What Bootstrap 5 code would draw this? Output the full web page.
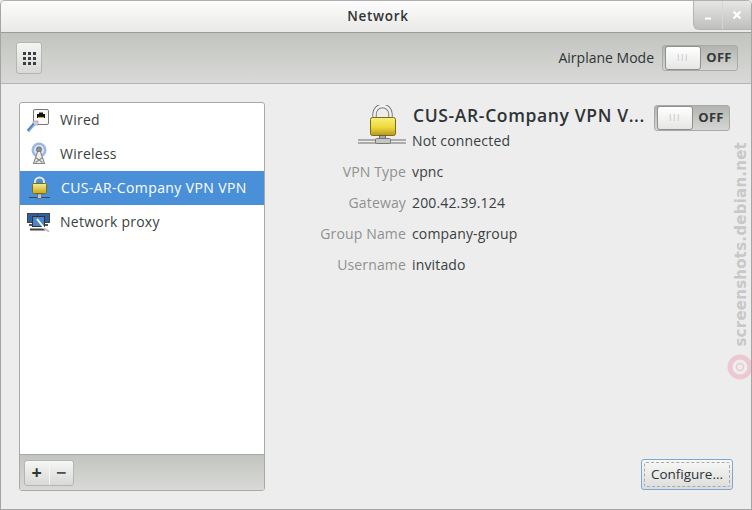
<!DOCTYPE html>
<html lang="en">
<head>
<meta charset="utf-8">
<title>Network</title>
<link href="https://cdn.jsdelivr.net/npm/bootstrap@5.3.0/dist/css/bootstrap.min.css" rel="stylesheet">
<style>
html,body{margin:0;width:752px;height:510px;overflow:hidden;background:#ededed}
body{font-family:"Open Sans","Noto Sans",sans-serif;font-size:14px;color:#2e3436;line-height:1.2}
.gwin{position:relative;width:752px;height:510px;border:1px solid #a5a6a3;border-top-color:#b0b0ae;border-radius:5px 5px 0 0;background:#ededed;overflow:hidden}
.gtitle{height:32px;padding-left:4px;background:linear-gradient(#fcfcfc,#e9e9e7);border-bottom:1px solid #9a9c98;font-weight:600;font-size:13.5px;letter-spacing:.7px}
.wmbtns{position:absolute;top:0;right:0;width:58px;height:29px;border:1px solid #b5b6b3;border-top:0;border-right:0;border-radius:0 0 0 6px;background:linear-gradient(#e6e6e4,#bfc0bd)}
.wmbtns>span{flex:1 1 0;height:100%}
.wmbtns>span+span{border-left:1px solid #d5d6d3}
.gtool{height:51px;padding:0 13px 0 15px;background:linear-gradient(#c2c4c0,#d9dad7);border-bottom:1px solid #b4b6b2}
.gridbtn{width:26px;height:32px;padding:0;border:1px solid #b4b6b2;border-radius:3px;background:linear-gradient(#f5f5f4,#d8d9d6)}
.gswitch{width:76px;height:26px;flex:none;border:1px solid #a8aaa6;border-radius:3px;background:linear-gradient(#b2b4b0,#d6d7d4)}
.gknob{width:36px;height:24px;margin-left:2px;border:1px solid #8e908c;border-radius:3px;background:linear-gradient(#fff,#e6e6e5);color:#c4c4c2;font-size:9px;letter-spacing:1.5px;font-weight:400}
.goff{flex:1;text-align:center;font-weight:700;font-size:13px;color:#33383a;letter-spacing:.3px}
.gbody{padding:18px;height:425px}
.gside{width:246px;height:389px;flex:none;border:1px solid #a8aaa6;border-radius:3px;background:#fff;overflow:hidden}
.gside .list-group{--bs-list-group-bg:transparent;--bs-list-group-border-width:0;--bs-list-group-color:#2e3436;--bs-list-group-border-radius:0}
.gitem{height:34px;padding:0 0 0 7px;gap:9px;font-size:14px;letter-spacing:.25px;color:#3a3f41}
.gitem.list-group-item.active{background:#4a90d9;color:#fff;--bs-list-group-active-bg:#4a90d9;gap:10px;letter-spacing:.38px}
.gitem svg{flex:none}
.gbar{height:36px;padding:5px 0 0 4px;margin-top:auto;background:linear-gradient(#c2c4c0,#d9dad7);border-top:1px solid #a9aba7}
.gpm{width:50px;height:26px;border:1px solid #b4b6b2;border-radius:3px;background:linear-gradient(#f6f6f5,#d9dad7)}
.gpm>span{flex:1 1 0;text-align:center;font-weight:700;font-size:18px;line-height:22px;color:#2e3436}
.gpm>span+span{border-left:1px solid #f5f5f5;color:#4a4f50}
.gmain{position:relative;height:388px}
.ghead{padding-left:93px;height:46px}
.gbig{flex:none;margin-top:3px;margin-right:5px}
.gname{font-weight:600;font-size:17.5px;letter-spacing:.63px;width:243px;white-space:nowrap;color:#2e3436;line-height:24px;padding-left:2px;margin-top:1px}
.gstat{font-size:14px;letter-spacing:.18px;margin-top:6px;padding-left:1px;color:#3a3f41}
.gsw2{margin-top:3px}
.gdetail{display:grid;grid-template-columns:141px auto;column-gap:6px;margin:16px 0 0;font-size:14px;letter-spacing:.15px}
.gdetail dt{font-weight:400;color:#8f9190;text-align:right;height:31px;margin:0}
.gdetail dd{margin:0;height:31px;color:#3a3f41}
.gconf{width:92px;height:31px;padding:0;border:1px solid #7ba7d6;border-radius:3px;background:linear-gradient(#f8f8f7,#dcdcda);font-size:13.5px;color:#2e3436;position:absolute;right:0;bottom:0}
.gconf>span{display:flex;align-items:center;justify-content:center;margin:2px;height:25px;border:1px dashed #a9a9a9;border-radius:2px}
.wmark{position:absolute;left:731px;top:141px;writing-mode:vertical-rl;transform:rotate(180deg);font-family:"DejaVu Sans",sans-serif;font-weight:700;font-size:15px;line-height:18px;letter-spacing:.24px;color:#c8c8c8;white-space:nowrap}
.wcam{position:absolute;left:726px;top:353px}
</style>
</head>
<body>
<div class="gwin">
  <div class="gtitle d-flex align-items-center justify-content-center">Network</div>
  <div class="wmbtns d-flex">
    <span class="d-flex align-items-center justify-content-center"><svg width="10" height="10" viewBox="0 0 10 10"><path d="M2 8.500h6" stroke="#fff" stroke-width="2"/></svg></span>
    <span class="d-flex align-items-center justify-content-center"><svg width="10" height="10" viewBox="0 0 10 10"><path d="M1.500 1.500l7 7M8.500 1.500l-7 7" stroke="#fff" stroke-width="2.200"/></svg></span>
  </div>

  <div class="gtool d-flex align-items-center justify-content-between">
    <button class="gridbtn d-flex align-items-center justify-content-center" type="button" aria-label="All settings">
      <svg width="13" height="13" viewBox="0 0 13 13" fill="#3a3f41"><rect x="0" y="0" width="3" height="3"/><rect x="5" y="0" width="3" height="3"/><rect x="10" y="0" width="3" height="3"/><rect x="0" y="5" width="3" height="3"/><rect x="5" y="5" width="3" height="3"/><rect x="10" y="5" width="3" height="3"/><rect x="0" y="10" width="3" height="3"/><rect x="5" y="10" width="3" height="3"/><rect x="10" y="10" width="3" height="3"/></svg>
    </button>
    <div class="d-flex align-items-center gap-2">
      <span>Airplane Mode</span>
      <div class="gswitch d-flex align-items-center"><div class="gknob d-flex align-items-center justify-content-center">III</div><div class="goff">OFF</div></div>
    </div>
  </div>

  <div class="gbody d-flex">
    <div class="gside d-flex flex-column">
      <div class="list-group">
        <div class="list-group-item gitem d-flex align-items-center">
          <svg width="24" height="24" viewBox="0 0 24 24"><rect x="6.500" y="1.500" width="15" height="15" rx="1.500" fill="#fafafa" stroke="#777"/><path d="M10 10V6h2V4.500h4V6h2v4z" fill="#111"/><path d="M11 9.500h6" stroke="#d8b400" stroke-width="1.200"/><path d="M6 13h5v4H6z" fill="#ccd" stroke="#999" stroke-width=".6"/><path d="M1 23l6-7" stroke="#4a80c4" stroke-width="3"/><path d="M2 23l6-7" stroke="#a5c4e8" stroke-width="1"/></svg>
          <span>Wired</span>
        </div>
        <div class="list-group-item gitem d-flex align-items-center">
          <svg width="24" height="24" viewBox="0 0 24 24"><circle cx="12" cy="8" r="7.500" fill="#7ea6dc" opacity=".8"/><circle cx="12" cy="8" r="5" fill="#dfe8f5"/><circle cx="12" cy="7.500" r="2.700" fill="#8e9193" stroke="#555" stroke-width=".6"/><path d="M10.500 10L6.500 21.500h11L13.500 10M8.500 15.500l7 5M15.500 15.500l-7 5" fill="#eee" stroke="#888" stroke-width="1.100"/></svg>
          <span>Wireless</span>
        </div>
        <div class="list-group-item active gitem d-flex align-items-center">
          <svg width="24" height="24" viewBox="0 0 24 24"><defs><linearGradient id="lk" x1="0" y1="0" x2="0" y2="1"><stop offset="0" stop-color="#f6ee8e"/><stop offset="1" stop-color="#c8a81f"/></linearGradient></defs><path d="M8 8V6a4.500 4.500 0 0 1 9 0V8" fill="none" stroke="#e6e6e2" stroke-width="2"/><rect x="5.500" y="7.500" width="14" height="10" rx="1" fill="url(#lk)" stroke="#7d6e14"/><path d="M2 21.500h21" stroke="#3b4a55" stroke-width="1.200"/><rect x="10.500" y="18" width="4" height="4.500" fill="#c5c5c5" stroke="#555" stroke-width=".6"/></svg>
          <span>CUS-AR-Company VPN VPN</span>
        </div>
        <div class="list-group-item gitem d-flex align-items-center">
          <svg width="24" height="24" viewBox="0 0 24 24"><rect x="0.500" y="3.500" width="12" height="9" fill="#2f5f9e" stroke="#444"/><rect x="10.500" y="3.500" width="12" height="9" fill="#2f5f9e" stroke="#444"/><rect x="5.500" y="6.500" width="12" height="10" fill="#4a86cc" stroke="#333"/><path d="M2 15h3M18 15h3" stroke="#555" stroke-width="2"/><path d="M3 19.500h15" stroke="#444" stroke-width="2"/><path d="M10 9l8 10" stroke="#fff" stroke-width="2"/><path d="M17 18.500l5 3" stroke="#bbb" stroke-width="1.500"/></svg>
          <span>Network proxy</span>
        </div>
      </div>
      <div class="gbar">
        <div class="gpm d-flex"><span>+</span><span>&#8722;</span></div>
      </div>
    </div>

    <div class="gmain flex-grow-1">
      <div class="ghead d-flex">
        <svg class="gbig" width="48" height="44" viewBox="0 0 48 44"><defs><linearGradient id="lb" x1="0" y1="0" x2="0" y2="1"><stop offset="0" stop-color="#f8ef7c"/><stop offset=".55" stop-color="#edd93a"/><stop offset="1" stop-color="#b8961a"/></linearGradient></defs><path d="M16.500 13V9a8 8 0 0 1 16 0v4" fill="none" stroke="#7e7e7a" stroke-width="4.500"/><path d="M16.500 13V9a8 8 0 0 1 16 0v4" fill="none" stroke="#f2f2f0" stroke-width="2.500"/><rect x="12.500" y="12.500" width="25" height="18" rx="2" fill="url(#lb)" stroke="#7d6e14"/><path d="M0 35h48M0 38h48" stroke="#6c6e6a" stroke-width="1.200"/><rect x="21.500" y="30.500" width="6" height="4" fill="#a8a8a6" stroke="#555" stroke-width=".8"/><rect x="17.500" y="33.500" width="15" height="5" rx="1" fill="#c4c4c2" stroke="#666" stroke-width=".8"/></svg>
        <div>
          <div class="gname">CUS-AR-Company VPN V...</div>
          <div class="gstat">Not connected</div>
        </div>
        <div class="gswitch gsw2 d-flex align-items-center"><div class="gknob d-flex align-items-center justify-content-center">III</div><div class="goff">OFF</div></div>
      </div>
      <dl class="gdetail">
        <dt>VPN Type</dt><dd>vpnc</dd>
        <dt>Gateway</dt><dd>200.42.39.124</dd>
        <dt>Group Name</dt><dd>company-group</dd>
        <dt>Username</dt><dd>invitado</dd>
      </dl>
      <button class="gconf" type="button"><span>Configure...</span></button>
    </div>
  </div>

  <div class="wmark">screenshots.debian.net</div>
  <svg class="wcam" width="26" height="26" viewBox="0 0 26 26"><circle cx="13" cy="13" r="10" fill="none" stroke="#ecc9d2" stroke-width="5"/><circle cx="13" cy="13" r="3.500" fill="none" stroke="#ecc9d2" stroke-width="1.500"/></svg>
</div>
</body>
</html>
